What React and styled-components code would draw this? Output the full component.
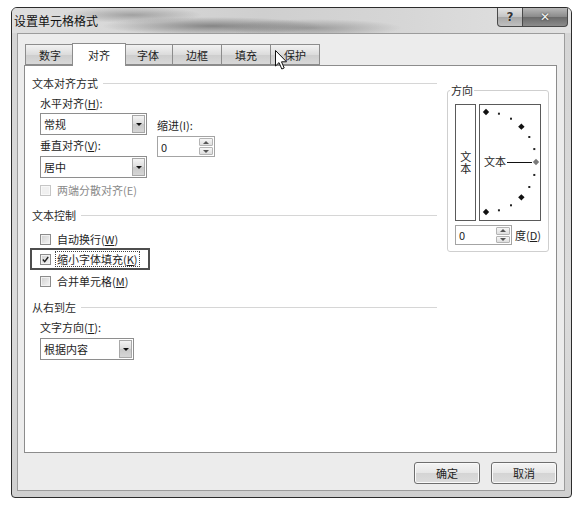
import React from "react";
import styled, { createGlobalStyle } from "styled-components";

const GlobalStyle = createGlobalStyle`
  html, body { margin: 0; padding: 0; background: #fff; }
  body {
    font-family: "Noto Sans CJK SC", "Noto Sans", sans-serif;
    font-size: 11px;
    color: #1e1e1e;
  }
`;

const Page = styled.div`
  width: 583px;
  height: 506px;
  box-sizing: border-box;
  padding: 7px 0 0 11px;
`;

const Window = styled.div`
  width: 561px;
  height: 491px;
  box-sizing: border-box;
  border: 1px solid #2c2c2c;
  border-radius: 6px 6px 4px 4px;
  background: linear-gradient(to bottom, #d4d4d4, #dcdcdc 60%, #d0d0d0);
  display: flex;
  flex-direction: column;
  overflow: hidden;
`;

const TitleBar = styled.div`
  height: 25px;
  display: flex;
  align-items: flex-start;
  justify-content: space-between;
  padding-left: 2px;
  padding-right: 3px;
  background:
    radial-gradient(ellipse 110px 9px at 200px 18px, rgba(70, 70, 70, 0.55), transparent),
    radial-gradient(ellipse 70px 8px at 120px 7px, rgba(80, 80, 80, 0.4), transparent),
    radial-gradient(ellipse 90px 9px at 300px 20px, rgba(90, 90, 90, 0.45), transparent),
    linear-gradient(to right, #dedede, #cfcfcf 45%, #d6d6d6 70%, #e2e2e2);
`;

const Title = styled.span`
  font-size: 12px;
  line-height: 25px;
  color: #111;
`;

const Caption = styled.div`
  display: flex;
`;

const CaptionButton = styled.div`
  width: ${p => p.$w}px;
  height: 19px;
  box-sizing: border-box;
  border: 1px solid #4a4a4a;
  border-top: none;
  border-radius: ${p => (p.$first ? "0 0 0 4px" : "0 0 4px 0")};
  margin-left: ${p => (p.$first ? 0 : -1)}px;
  background: ${p =>
    p.$dark
      ? "linear-gradient(to bottom, #b8b8b8, #8a8a8a 50%, #6a6a6a 51%, #8c8c8c)"
      : "linear-gradient(to bottom, #e4e4e4, #c4c4c4 50%, #a6a6a6 51%, #c0c0c0)"};
  display: flex;
  align-items: center;
  justify-content: center;
  font-family: "DejaVu Sans", sans-serif;
  font-weight: bold;
  font-size: 12px;
  color: ${p => (p.$dark ? "#f4f4f4" : "#333")};
  text-shadow: ${p => (p.$dark ? "0 0 2px #222" : "0 0 1px #fff")};
`;

const Body = styled.div`
  flex: 1;
  display: flex;
  padding: 0 6px 6px 5px;
`;

const Client = styled.div`
  flex: 1;
  position: relative;
  border: 1px solid #9c9c9c;
  background: #ececec;
  display: flex;
  flex-direction: column;
  padding: 9px 7px 0 6px;
`;

const TabStrip = styled.div`
  display: flex;
  align-items: flex-end;
  height: 22px;
`;

const Tab = styled.div`
  position: relative;
  box-sizing: border-box;
  width: ${p => (p.$active ? 54 : 50)}px;
  height: ${p => (p.$active ? 23 : 21)}px;
  margin: 0 ${p => (p.$active ? -2 : 0)}px ${p => (p.$active ? -1 : 0)}px
    ${p => (p.$active ? -3 : -1)}px;
  z-index: ${p => (p.$active ? 2 : 1)};
  border: 1px solid #8c8c8c;
  border-bottom: ${p => (p.$active ? "none" : "1px solid #8c8c8c")};
  background: ${p =>
    p.$active ? "#fff" : "linear-gradient(to bottom, #f2f2f2, #dcdcdc 50%, #cdcdcd 51%, #d8d8d8)"};
  display: flex;
  align-items: center;
  justify-content: center;
  line-height: 1;
  padding-top: 1px;
  color: #1e1e1e;
  &:first-child { margin-left: 1px; }
`;

const Panel = styled.div`
  height: 388px;
  box-sizing: border-box;
  border: 1px solid #8c8c8c;
  background: #fff;
  display: flex;
  align-items: flex-start;
  padding: 7px 7px 0 7px;
`;

const LeftCol = styled.div`
  width: 405px;
  display: flex;
  flex-direction: column;
`;

const SectionHead = styled.div`
  display: flex;
  align-items: center;
  gap: 5px;
  height: 20px;
  margin-top: ${p => p.$mt || 0}px;
  color: #2a2a2a;
  &::after {
    content: "";
    flex: 1;
    height: 1px;
    background: #d6d6d6;
  }
`;

const Indent = styled.div`
  display: flex;
  flex-direction: column;
  align-items: flex-start;
  padding-left: 8px;
`;

const FieldRow = styled.div`
  display: flex;
  gap: 10px;
`;

const Stack = styled.div`
  display: flex;
  flex-direction: column;
  align-items: flex-start;
  padding-top: ${p => p.$pt || 0}px;
`;

const Label = styled.div`
  line-height: 20px;
  height: 20px;
  margin-top: ${p => p.$mt || 0}px;
`;

const U = styled.span`
  text-decoration: underline;
`;

const SelectBox = styled.div`
  box-sizing: border-box;
  width: ${p => p.$w}px;
  height: 22px;
  margin-top: ${p => p.$mt || 0}px;
  border: 1px solid #8e8e8e;
  background: #fff;
  display: flex;
  align-items: stretch;
`;

const SelectText = styled.span`
  flex: 1;
  padding-left: 3px;
  display: flex;
  align-items: center;
`;

const DropButton = styled.span`
  width: 13px;
  margin: 1px;
  box-sizing: border-box;
  border: 1px solid #a8a8a8;
  background: linear-gradient(to bottom, #f4f4f4, #dcdcdc 50%, #c8c8c8 51%, #d6d6d6);
  display: flex;
  align-items: center;
  justify-content: center;
  &::after {
    content: "";
    border-left: 3px solid transparent;
    border-right: 3px solid transparent;
    border-top: 3px solid #111;
  }
`;

const SpinBox = styled.div`
  box-sizing: border-box;
  width: ${p => p.$w}px;
  height: ${p => p.$h}px;
  margin-top: ${p => p.$mt || 0}px;
  border: 1px solid #a4a4a4;
  background: #fff;
  display: flex;
  align-items: stretch;
`;

const SpinText = styled.span`
  flex: 1;
  padding-left: 3px;
  display: flex;
  align-items: center;
`;

const SpinButtons = styled.span`
  width: 14px;
  margin: 1px;
  display: flex;
  flex-direction: column;
  gap: 1px;
`;

const SpinArrow = styled.span`
  flex: 1;
  box-sizing: border-box;
  border: 1px solid #b4b4b4;
  border-radius: 1px;
  background: linear-gradient(to bottom, #f6f6f6, #dedede);
  display: flex;
  align-items: center;
  justify-content: center;
  &::after {
    content: "";
    border-left: 3px solid transparent;
    border-right: 3px solid transparent;
    ${p => (p.$up ? "border-bottom: 3px solid #555;" : "border-top: 3px solid #555;")}
  }
`;

const CheckRow = styled.div`
  display: flex;
  align-items: center;
  gap: 6px;
  height: ${p => p.$h || 20}px;
  margin-top: ${p => p.$mt || 0}px;
  color: ${p => (p.$disabled ? "#8a8a8a" : "#1e1e1e")};
`;

const HighlightRow = styled(CheckRow)`
  box-sizing: border-box;
  width: 120px;
  height: 22px;
  margin-left: -10px;
  padding-left: 8px;
  border: 2px solid #4e4e4e;
`;

const Box = styled.span`
  box-sizing: border-box;
  width: 11px;
  height: 11px;
  flex: none;
  border: 1px solid ${p => (p.$disabled ? "#c6c6c6" : "#8c8c8c")};
  background: ${p =>
    p.$disabled
      ? "#f0f0f0"
      : "linear-gradient(135deg, #cfcfcf, #e6e6e6 60%, #f6f6f6)"};
  box-shadow: inset 0 0 0 1px ${p => (p.$disabled ? "#f8f8f8" : "#f2f2f2")};
  display: flex;
  align-items: center;
  justify-content: center;
`;

const Focus = styled.span`
  outline: 1px dotted #444;
  padding: 0 1px;
  line-height: 14px;
  margin-left: -1px;
`;

const Orientation = styled.fieldset`
  margin: 10px 0 0 10px;
  width: 102px;
  box-sizing: border-box;
  border: 1px solid #cfcfcf;
  border-radius: 3px;
  padding: 0 6px 6px 7px;
  min-width: 0;
`;

const Legend = styled.legend`
  padding: 0 1px;
  margin-left: -5px;
  line-height: 14px;
  color: #2a2a2a;
`;

const OrientRow = styled.div`
  display: flex;
  gap: 3px;
  margin-top: 7px;
`;

const VerticalText = styled.div`
  box-sizing: border-box;
  width: 21px;
  height: 117px;
  border: 1px solid #5a5a5a;
  writing-mode: vertical-rl;
  display: flex;
  align-items: center;
  justify-content: center;
  line-height: 1.15;
  letter-spacing: 1px;
`;

const DialBox = styled.div`
  box-sizing: border-box;
  width: 62px;
  height: 117px;
  border: 1px solid #5a5a5a;
  display: flex;
`;

const DegreeRow = styled.div`
  display: flex;
  align-items: center;
  gap: 3px;
  margin-top: 4px;
`;

const ButtonRow = styled.div`
  display: flex;
  justify-content: flex-end;
  gap: 11px;
  margin-top: 9px;
`;

const PushButton = styled.div`
  box-sizing: border-box;
  width: 66px;
  height: 22px;
  border: 1px solid #6e6e6e;
  border-radius: 3px;
  background: linear-gradient(to bottom, #f4f4f4, #e6e6e6 50%, #d4d4d4 51%, #dcdcdc);
  box-shadow: inset 0 0 0 1px #fafafa;
  display: flex;
  align-items: center;
  justify-content: center;
`;

const Cursor = styled.svg`
  position: absolute;
  left: 257px;
  top: 16px;
  z-index: 5;
  pointer-events: none;
`;

const Select = ({ width, value, mt }) => (
  <SelectBox $w={width} $mt={mt}>
    <SelectText>{value}</SelectText>
    <DropButton />
  </SelectBox>
);

const Spinner = ({ width, height, value, mt }) => (
  <SpinBox $w={width} $h={height} $mt={mt}>
    <SpinText>{value}</SpinText>
    <SpinButtons>
      <SpinArrow $up />
      <SpinArrow />
    </SpinButtons>
  </SpinBox>
);

const CheckMark = () => (
  <svg width="7" height="7" viewBox="0 0 7 7">
    <path d="M0.8 3.6 L2.7 5.6 L6.2 1.0" fill="none" stroke="#222" strokeWidth="1.4" />
  </svg>
);

const Dial = () => {
  const cx = 6;
  const cy = 57;
  const r = 50;
  const marks = [];
  for (let a = 90; a >= -90; a -= 15) {
    const rad = (a * Math.PI) / 180;
    const x = cx + r * Math.cos(rad);
    const y = cy - r * Math.sin(rad);
    if (a % 45 === 0) {
      const s = 3.2;
      marks.push(
        <polygon
          key={a}
          points={`${x},${y - s} ${x + s},${y} ${x},${y + s} ${x - s},${y}`}
          fill={a === 0 ? "#7a7a7a" : "#111"}
        />
      );
    } else {
      marks.push(<rect key={a} x={x - 1} y={y - 1} width="2" height="2" fill="#222" />);
    }
  }
  return (
    <svg width="60" height="115" viewBox="0 0 60 115">
      {marks}
      <text x="4" y="61" fontSize="11" fontFamily="Noto Sans CJK SC, sans-serif" fill="#1e1e1e">
        文本
      </text>
      <line x1="27" y1="57.5" x2="52" y2="57.5" stroke="#111" strokeWidth="1" />
    </svg>
  );
};

const tabs = ["数字", "对齐", "字体", "边框", "填充", "保护"];

export default function App() {
  return (
    <Page>
      <GlobalStyle />
      <Window>
        <TitleBar>
          <Title>设置单元格格式</Title>
          <Caption>
            <CaptionButton $w={26} $first>?</CaptionButton>
            <CaptionButton $w={46} $dark>✕</CaptionButton>
          </Caption>
        </TitleBar>
        <Body>
          <Client>
            <TabStrip>
              {tabs.map(t => (
                <Tab key={t} $active={t === "对齐"}>{t}</Tab>
              ))}
            </TabStrip>
            <Panel>
              <LeftCol>
                <SectionHead>文本对齐方式</SectionHead>
                <Indent>
                  <FieldRow>
                    <Stack>
                      <Label>水平对齐(<U>H</U>):</Label>
                      <Select width={107} value="常规" />
                      <Label>垂直对齐(<U>V</U>):</Label>
                      <Select width={107} value="居中" mt={1} />
                    </Stack>
                    <Stack $pt={22}>
                      <Label>缩进(I):</Label>
                      <Spinner width={58} height={21} value="0" mt={1} />
                    </Stack>
                  </FieldRow>
                  <CheckRow $disabled $h={16} $mt={4}>
                    <Box $disabled />
                    <span>两端分散对齐(E)</span>
                  </CheckRow>
                </Indent>
                <SectionHead $mt={7}>文本控制</SectionHead>
                <Indent>
                  <CheckRow $mt={4}>
                    <Box />
                    <span>自动换行(<U>W</U>)</span>
                  </CheckRow>
                  <HighlightRow $mt={-1}>
                    <Box>
                      <CheckMark />
                    </Box>
                    <Focus>缩小字体填充(<U>K</U>)</Focus>
                  </HighlightRow>
                  <CheckRow $mt={1}>
                    <Box />
                    <span>合并单元格(<U>M</U>)</span>
                  </CheckRow>
                </Indent>
                <SectionHead $mt={6}>从右到左</SectionHead>
                <Indent>
                  <Label>文字方向(<U>T</U>):</Label>
                  <Select width={94} value="根据内容" mt={1} />
                </Indent>
              </LeftCol>
              <Orientation>
                <Legend>方向</Legend>
                <OrientRow>
                  <VerticalText>文本</VerticalText>
                  <DialBox>
                    <Dial />
                  </DialBox>
                </OrientRow>
                <DegreeRow>
                  <Spinner width={57} height={20} value="0" />
                  <span>度(<U>D</U>)</span>
                </DegreeRow>
              </Orientation>
            </Panel>
            <ButtonRow>
              <PushButton>确定</PushButton>
              <PushButton>取消</PushButton>
            </ButtonRow>
            <Cursor width="13" height="20" viewBox="0 0 13 20">
              <path
                d="M0.5 0.5 L0.5 16 L4 12.6 L6.8 19 L9.2 18 L6.5 11.8 L11.5 11.8 Z"
                fill="#fff"
                stroke="#111"
                strokeWidth="1"
                strokeLinejoin="round"
              />
            </Cursor>
          </Client>
        </Body>
      </Window>
    </Page>
  );
}
